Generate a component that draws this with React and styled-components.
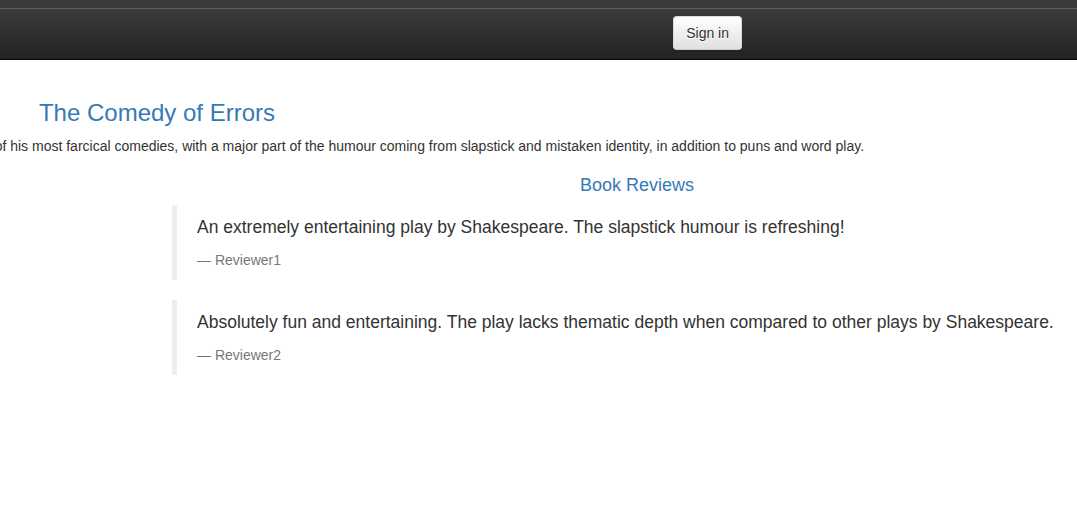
import React from 'react';
import styled, { createGlobalStyle } from 'styled-components';

const GlobalStyle = createGlobalStyle`
  html, body {
    margin: 0;
    padding: 0;
    background: #fff;
    overflow: hidden;
  }
  body {
    font-family: "Liberation Sans", Arial, Helvetica, sans-serif;
    font-size: 14px;
    line-height: 1.42857143;
    color: #333;
  }
  * {
    box-sizing: border-box;
  }
`;

// the page is 1920px wide and scrolled sideways in the screenshot
const Page = styled.div`
  width: 1920px;
  margin-left: -803px;
`;

const TopStrip = styled.div`
  height: 9px;
  background: #3a3a3a;
  border-bottom: 1px solid #5e5e5e;
`;

const Navbar = styled.nav`
  min-height: 51px;
  background-image: linear-gradient(to bottom, #3c3c3c 0, #222 100%);
  border-bottom: 1px solid #080808;
  margin-bottom: 20px;
`;

const NavContainer = styled.div`
  width: 1170px;
  margin: 0 auto;
  padding: 0 0 0 15px;
  display: flex;
  align-items: flex-start;
  justify-content: space-between;
`;

const Brand = styled.a`
  height: 50px;
  padding: 15px 15px 15px 0;
  font-size: 18px;
  line-height: 20px;
  color: #9d9d9d;
  text-decoration: none;
`;

const SignInButton = styled.button`
  margin-top: 7px;
  padding: 6px 12px;
  font-family: inherit;
  font-size: 14px;
  line-height: 1.42857143;
  color: #333;
  background-image: linear-gradient(to bottom, #fff 0, #e0e0e0 100%);
  border: 1px solid #ccc;
  border-color: #dbdbdb #dbdbdb #ccc;
  border-radius: 4px;
  text-shadow: 0 1px 0 #fff;
  box-shadow: inset 0 1px 0 rgba(255, 255, 255, 0.15), 0 1px 1px rgba(0, 0, 0, 0.075);
  cursor: pointer;
`;

const Fluid = styled.div`
  padding: 0 15px;
`;

const Row = styled.div`
  display: flex;
  margin: 0 -15px;
`;

const Col = styled.div`
  width: ${({ span }) => (span / 12) * 100}%;
  padding: 0 15px;
`;

const Title = styled.h3`
  margin: 20px 0 10px;
  font-size: 24px;
  font-weight: 500;
  line-height: 1.1;
  text-align: center;
  color: #337ab7;
`;

const Summary = styled.p`
  margin: 0 0 10px;
  white-space: nowrap;

  a {
    color: #337ab7;
    text-decoration: none;
  }
`;

const SectionTitle = styled.h4`
  margin: 10px 0 9px;
  font-size: 18px;
  font-weight: 500;
  line-height: 1.1;
  text-align: center;
  color: #337ab7;
`;

const Review = styled.blockquote`
  margin: 0 0 20px;
  padding: 10px 20px;
  font-size: 17.5px;
  border-left: 5px solid #eee;

  p {
    margin: 0 0 10px;
  }
`;

const Reviewer = styled.small`
  display: block;
  font-size: 80%;
  line-height: 1.42857143;
  color: #777;

  &::before {
    content: '\\2014 \\00A0';
  }
`;

const reviews = [
  {
    text: 'An extremely entertaining play by Shakespeare. The slapstick humour is refreshing!',
    by: 'Reviewer1',
  },
  {
    text: 'Absolutely fun and entertaining. The play lacks thematic depth when compared to other plays by Shakespeare.',
    by: 'Reviewer2',
  },
];

const App = () => {
  return (
    <>
      <GlobalStyle />
      <Page>
        <TopStrip />
        <Navbar>
          <NavContainer>
            <Brand href="#">BookInfo Sample</Brand>
            <SignInButton type="button">Sign in</SignInButton>
          </NavContainer>
        </Navbar>
        <Fluid>
          <Row>
            <Col span={12}>
              <Title>The Comedy of Errors</Title>
              <Summary>
                Summary: <a href="#">Wikipedia Summary</a>: The Comedy of Errors is one of{' '}
                <b>William Shakespeare's</b> early plays. It is his shortest and one of his most
                farcical comedies, with a major part of the humour coming from slapstick and
                mistaken identity, in addition to puns and word play.
              </Summary>
            </Col>
          </Row>
          <Row>
            <Col span={6} />
            <Col span={6}>
              <SectionTitle>Book Reviews</SectionTitle>
              {reviews.map((r) => (
                <Review key={r.by}>
                  <p>{r.text}</p>
                  <Reviewer>{r.by}</Reviewer>
                </Review>
              ))}
            </Col>
          </Row>
        </Fluid>
      </Page>
    </>
  );
};

export default App;
